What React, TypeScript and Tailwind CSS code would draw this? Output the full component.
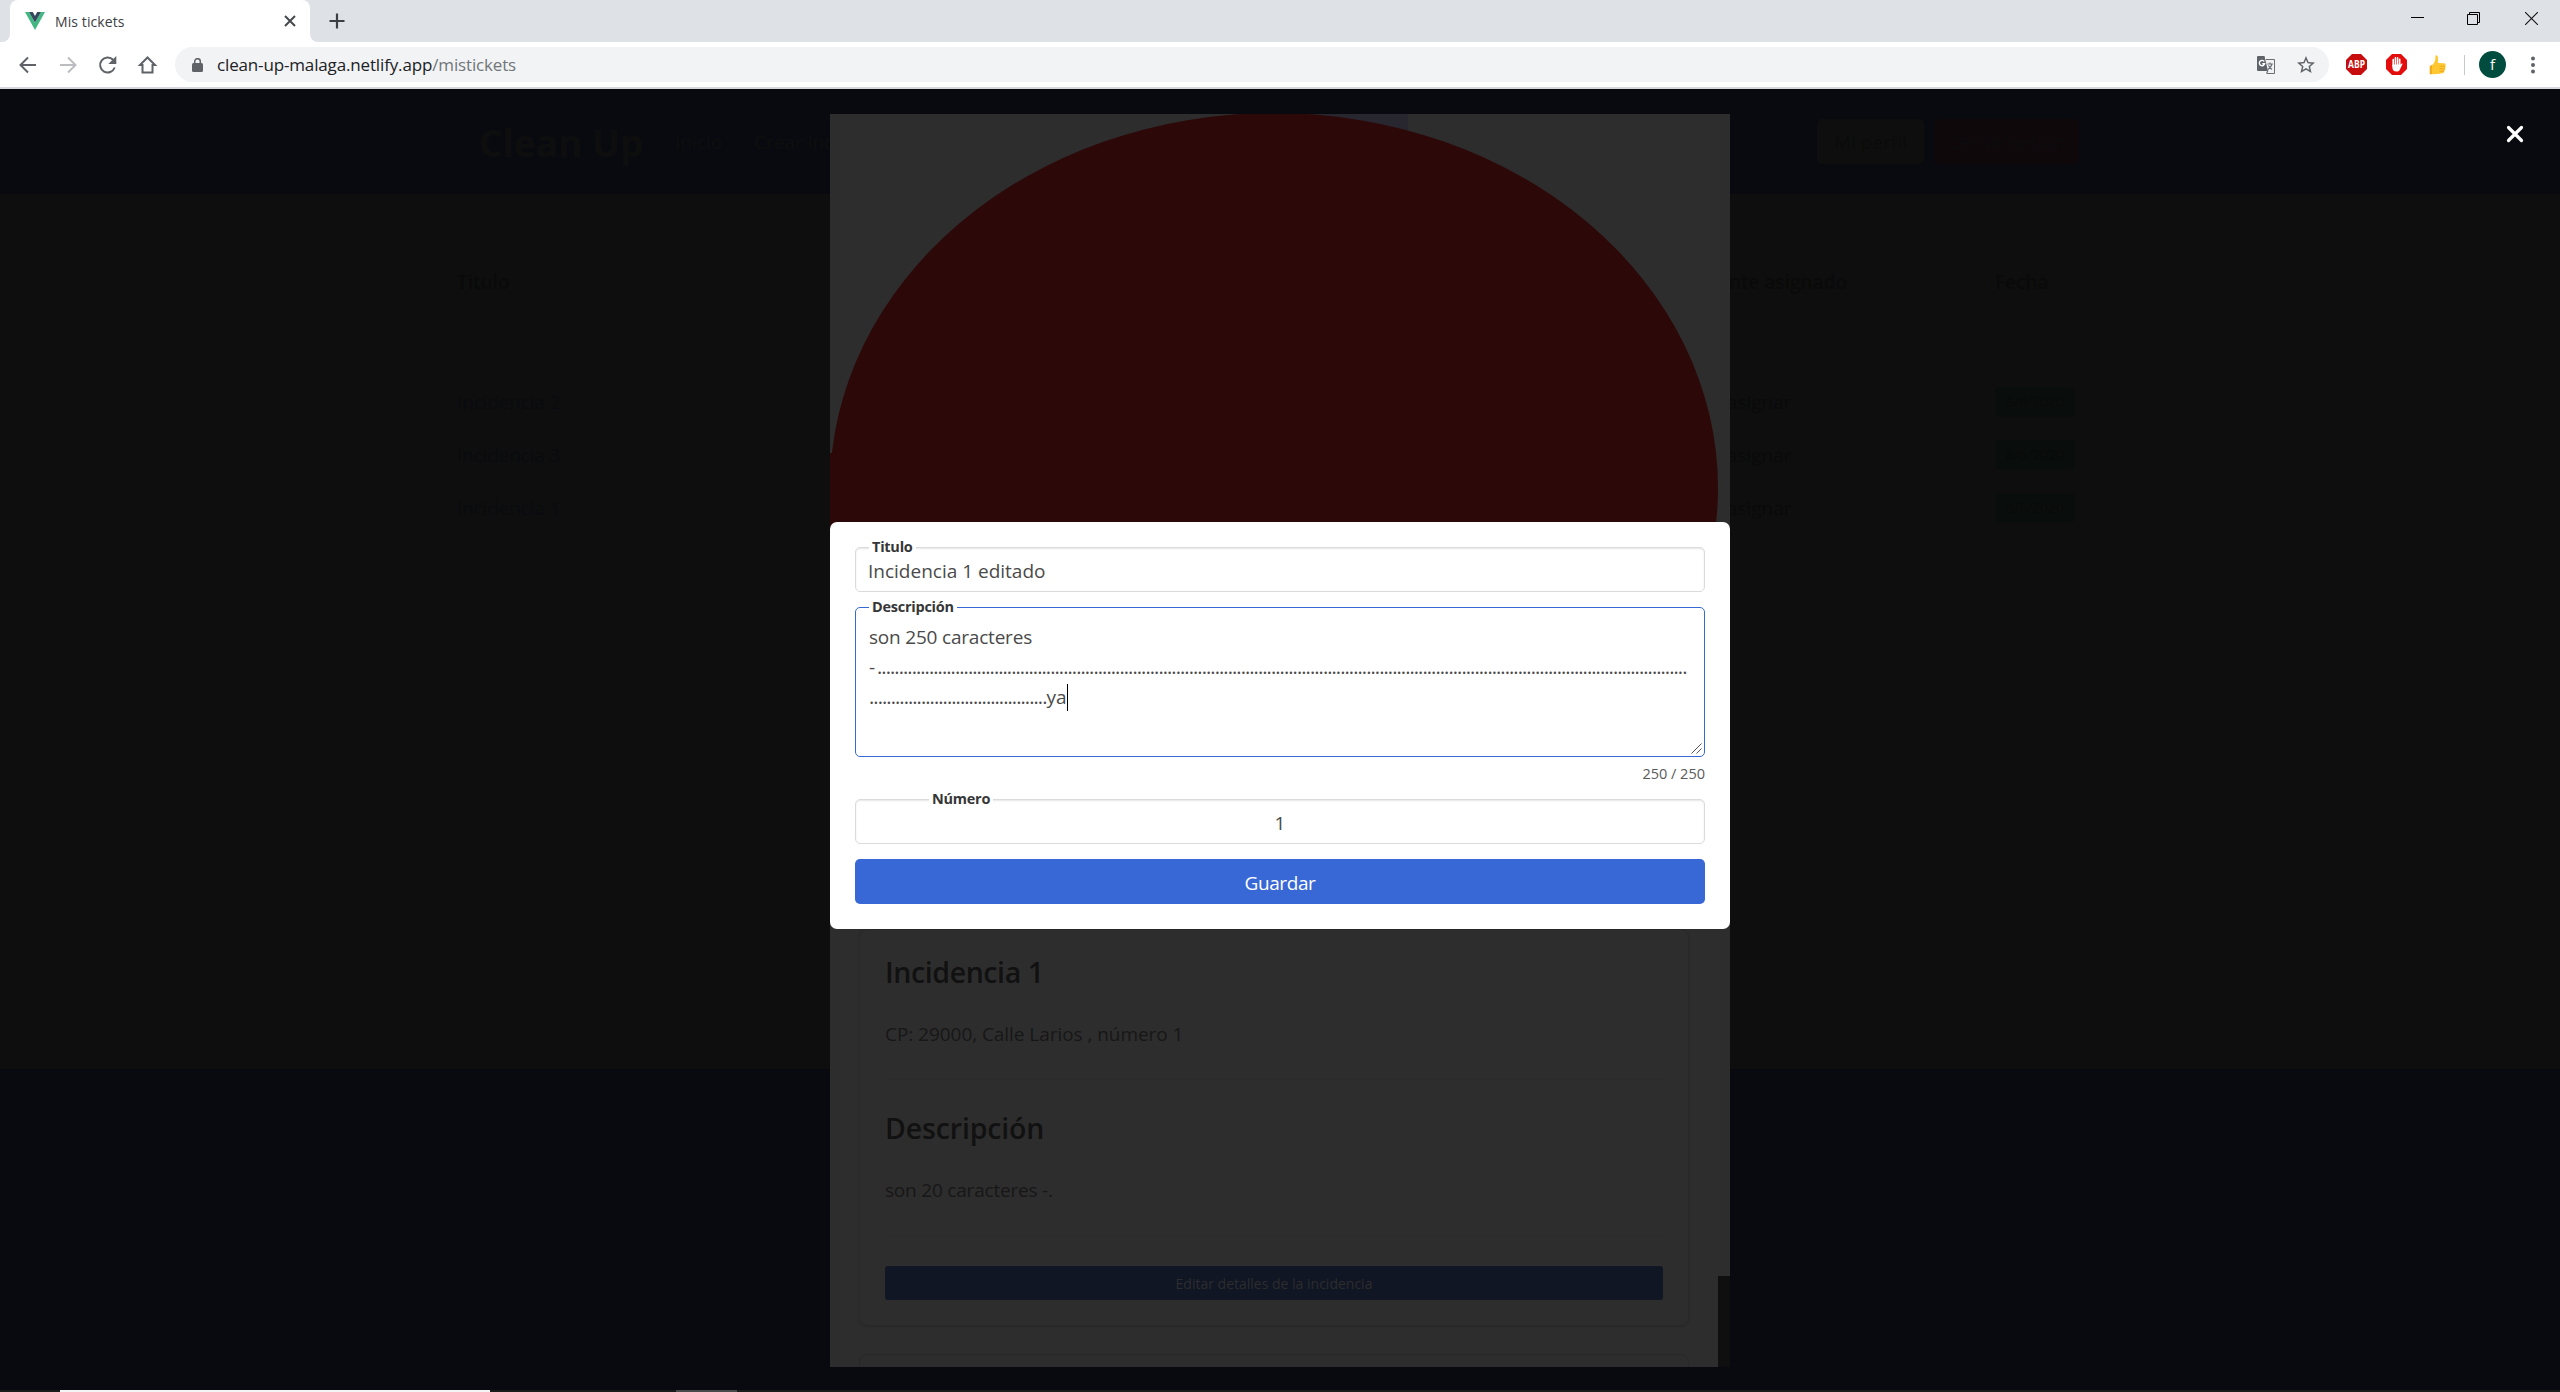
import React from "react";

const DOTS_FULL = ".".repeat(187);
const DOTS_REST = ".".repeat(41);

function TabStrip() {
  return (
    <div className="flex h-[42px] bg-[#dee1e6]">
      <div className="h-full w-[10px] bg-white">
        <div className="h-full w-full rounded-br-[8px] bg-[#dee1e6]" />
      </div>
      <div className="flex h-full w-[300px] items-center rounded-t-[8px] bg-white pl-[15px]">
        <svg width="20" height="18" viewBox="0 0 20 18">
          <path d="M0 0h4l6 10.5L16 0h4L10 18z" fill="#41b883" />
          <path d="M4 0h3.8L10 4l2.200-4H16l-6 10.500z" fill="#34495e" />
        </svg>
        <span className="ml-[10px] w-[219px] text-[14px] tracking-[0.1px] text-[#3c4043]">Mis tickets</span>
        <svg width="12" height="12" viewBox="0 0 12 12" className="ml-[10px]">
          <path d="M1 1l10 10M11 1L1 11" stroke="#45494d" strokeWidth="2" />
        </svg>
      </div>
      <div className="h-full w-[10px] bg-white">
        <div className="h-full w-full rounded-bl-[8px] bg-[#dee1e6]" />
      </div>
      <svg width="16" height="16" viewBox="0 0 16 16" className="mt-[13px] ml-[9px]">
        <path d="M8 0.500v15M0.500 8h15" stroke="#3c4043" strokeWidth="2.200" />
      </svg>
      <div className="flex-1" />
      <svg width="13" height="14" viewBox="0 0 13 14" className="mt-[12px] mr-[43px]">
        <path d="M0 5.500h13" stroke="#000" />
      </svg>
      <svg width="13" height="14" viewBox="0 0 13 14" className="mt-[12px] mr-[45px]">
        <path d="M0.500 2.500h10v10h-10zM2.500 2.500v-2h10v10h-2" stroke="#000" fill="none" />
      </svg>
      <svg width="13" height="13" viewBox="0 0 13 13" className="mt-[12px] mr-[22px]">
        <path d="M0 0l13 13M13 0L0 13" stroke="#111" strokeWidth="1.100" />
      </svg>
    </div>
  );
}

function AddressBar() {
  return (
    <div className="flex h-[47px] items-center border-b-2 border-[#d5d8dc] bg-white">
      <svg width="175" height="26" viewBox="0 0 175 26" fill="none" stroke="#5f6368" strokeWidth="2">
        <path d="M36 13H21M28 5.500L20.500 13l7.500 7.500" />
        <path d="M60 13h15M68 5.500l7.500 7.500-7.500 7.500" stroke="#bbbdc0" />
        <path d="M114.700 15.500a7.500 7.500 0 1 1-1.600-7.700" />
        <path d="M116.300 4v8h-8z" fill="#5f6368" stroke="none" />
        <path d="M142.500 20.500v-7.500h-2.500l7.500-7.500 7.500 7.500h-2.500v7.500z" />
      </svg>
      <div className="flex h-[35px] w-[2154px] items-center rounded-full bg-[#f1f3f4] pl-[17px]">
        <svg width="11" height="15" viewBox="0 0 11 15" className="mt-[2px]">
          <rect y="5" width="11" height="9" rx="1.500" fill="#5f6368" />
          <path d="M2.700 6V3.500a2.800 2.800 0 0 1 5.600 0V6" fill="none" stroke="#5f6368" strokeWidth="1.500" />
        </svg>
        <span className="ml-[14px] text-[17px] tracking-[-0.15px] text-[#202124]">
          clean-up-malaga.netlify.app<span className="text-[#72767a]">/mistickets</span>
        </span>
        <div className="flex-1" />
        <svg width="18" height="18" viewBox="0 0 18 18" className="mr-[22px]">
          <path d="M9 3.500h8.500v14H10" fill="#f1f3f4" stroke="#6a6e72" strokeWidth="1" />
          <path d="M1 0h6.500l3.500 15H1a1 1 0 0 1-1-1V1a1 1 0 0 1 1-1z" fill="#5f6368" />
          <path d="M7.300 5.500A2.700 2.700 0 1 0 7.700 7.700H5.300" fill="none" stroke="#fff" strokeWidth="1.400" />
          <path d="M10.300 8h5.500M13 6.500V8M15 8c-.5 2-2 4-4 5.500M11.500 9.500c1 2 2 3 3.500 4M9.500 17.500l1.500-3" fill="none" stroke="#6a6e72" strokeWidth="1.100" />
        </svg>
        <svg width="18" height="18" viewBox="2 2 20 20" className="mr-[14px]">
          <path d="M22 9.240l-7.190-.62L12 2 9.190 8.630 2 9.240l5.460 4.730L5.820 21 12 17.270 18.180 21l-1.630-7.030L22 9.240zM12 15.400l-3.760 2.270 1-4.280-3.320-2.880 4.380-.38L12 6.100l1.710 4.040 4.380.38-3.320 2.880 1 4.280L12 15.400z" fill="#5f6368" />
        </svg>
      </div>
      <svg width="21" height="21" viewBox="0 0 21 21" className="ml-[17px] overflow-visible">
        <path d="M6 0h9l6 6v9l-6 6H6l-6-6V6z" fill="#c70d0d" />
        <text x="2" y="14.300" fontSize="11" fontWeight="700" fill="#fff" textLength="17" lengthAdjust="spacingAndGlyphs">ABP</text>
      </svg>
      <svg width="21" height="21" viewBox="0 0 21 21" className="ml-[19px]">
        <path d="M6 0h9l6 6v9l-6 6H6l-6-6V6z" fill="#e40d0d" />
        <path d="M7.200 5.500v7M9.400 3.700v8M11.600 3.700v8M13.700 5.200v7" stroke="#fff" strokeWidth="1.600" strokeLinecap="round" />
        <path d="M6.400 10.500h8.100l1.200-1c.8-.3 1 .3.600.9l-2.400 5c-.7 1.400-1.500 2-3.200 2-3 0-4.300-1.400-4.300-4z" fill="#fff" />
      </svg>
      <svg width="17" height="20" viewBox="0 0 17 20" className="ml-[22px]">
        <path d="M6.500 0.500C8 0 9 1 9 3v5l6 .3c2 0 2 2 1.200 2.700.8.8.7 2-.2 2.600.5 1 0 2-.8 2.400.2 1.300-.6 2-1.700 2.200-4 .8-8 1.200-12 1V11C4.500 10 6.500 6 6.300 3z" fill="#ffc832" />
        <path d="M0.700 11L3 10v9l-2.300.3z" fill="#f0ab20" />
        <path d="M10.500 11.200h5.500M10.500 13.800h5.200M10.500 16.300h4.600" stroke="#e8a21c" strokeWidth=".8" />
      </svg>
      <div className="ml-[18px] h-[20px] w-px bg-[#c6c9cc]" />
      <div className="ml-[14px] flex size-[27px] items-center justify-center rounded-full bg-[#004d40] text-[15px] text-white">f</div>
      <svg width="4" height="18" viewBox="0 0 4 18" className="ml-[25px]" fill="#5f6368">
        <circle cx="2" cy="2.500" r="2" />
        <circle cx="2" cy="9" r="2" />
        <circle cx="2" cy="15.500" r="2" />
      </svg>
    </div>
  );
}

function DimmedPage() {
  const rows = [
    ["Incidencia 2", "Sin asignar"],
    ["Incidencia 3", "Sin asignar"],
    ["Incidencia 1", "Sin asignar"],
  ];
  return (
    <div className="flex h-full flex-col bg-[#0e0e0e] text-[19px] text-[#0a0a0a]">
      <div className="flex h-[105px] items-start bg-[#090a0f] pl-[479px] text-[#0e0e0e]">
        <div className="mt-[29px] w-[196px] text-[37px] leading-[50px] font-bold">Clean Up</div>
        <div className="mt-[39px] w-[79px] leading-[28px]">Inicio</div>
        <div className="mt-[39px] w-[1063px] leading-[28px]">Crear incidencia</div>
        <div className="mt-[30px] flex h-[45px] w-[107px] items-center justify-center rounded-[5px] bg-[#0e0e0e] pt-[2px] text-[#0b0b0c]">Mi perfil</div>
        <div className="mt-[30px] ml-[10px] flex h-[45px] w-[145px] items-center justify-center rounded-[5px] bg-[#0e080a] pt-[2px] text-[#0c0b0d]">Cerrar sesión</div>
      </div>
      <div className="mt-[74px] flex h-[28px] items-center pl-[457px] font-semibold">
        <div className="w-[1238px]">Titulo</div>
        <div className="w-[300px]">Agente asignado</div>
        <div>Fecha</div>
      </div>
      <div className="mt-[79px] flex-1">
        {rows.map(([title, agent]) => (
          <div key={title} className="flex h-[53px] items-center pl-[457px]">
            <div className="w-[1238px] pt-[2px] tracking-[-0.150px] text-[#0a0b0e]">{title}</div>
            <div className="w-[300px] pt-[2px]">{agent}</div>
            <div className="flex h-[30px] w-[80px] items-center justify-center rounded-[5px] bg-[#090d0c] text-[14px]">8/6/2020</div>
          </div>
        ))}
      </div>
      <div className="h-[321px] bg-[#090a0f]" />
    </div>
  );
}

function TicketPanel() {
  return (
    <div className="flex h-[1253px] w-[900px] overflow-hidden bg-[#2d2d2d] text-[#171717]">
      <div className="flex w-[888px] flex-col">
        <svg width="888" height="724" viewBox="0 0 888 724" className="shrink-0">
          <path d="M480 0h98v60h-98z" fill="#28272f" />
          <ellipse cx="444" cy="374" rx="444" ry="375" fill="#2d0809" />
          <rect y="339" width="8" height="80" fill="#2d0809" />
        </svg>
        <div className="mx-[29px] mt-[91px] h-[397px] shrink-0 rounded-[8px] border border-[#282828] px-[25px] shadow-[0_1px_2px_#282828]">
          <div className="mt-[22px] text-[28.500px] leading-[40px] font-semibold tracking-[-0.4px] text-[#111]">Incidencia 1</div>
          <div className="mt-[28px] text-[19px] leading-[28px] tracking-[-0.050px]">CP: 29000, Calle Larios , número 1</div>
          <div className="mt-[31px] h-px bg-[#2b2b2b]" />
          <div className="mt-[28px] text-[28.500px] leading-[40px] font-semibold tracking-[-0.150px] text-[#111]">Descripción</div>
          <div className="mt-[28px] text-[19px] leading-[28px] tracking-[-0.200px]">son 20 caracteres -.</div>
          <div className="mt-[31px] h-px bg-[#2b2b2b]" />
          <div className="mt-[30px] flex h-[34px] items-center justify-center rounded-[3px] bg-[#101624] text-[14px] text-[#2d2d2d]">Editar detalles de la incidencia</div>
        </div>
        <div className="mx-[29px] mt-[28px] h-[80px] shrink-0 rounded-[8px] border border-[#282828]" />
      </div>
      <div className="mt-[1162px] h-[92px] w-[12px] bg-[#0f0f10]" />
    </div>
  );
}

function Label({ children, left }: { children: React.ReactNode; left: string }) {
  return <span className={`absolute -top-[12px] bg-white px-[3px] text-[14.500px] leading-[22px] font-bold tracking-[-0.250px] text-[#363636] ${left}`}>{children}</span>;
}

function EditForm() {
  return (
    <div className="flex h-[407px] w-[900px] flex-col rounded-[7px] bg-white px-[25px] pt-[25px] text-[19px] text-[#4a4a4a]">
      <div className="relative flex h-[45px] items-center rounded-[5px] border border-[#dbdbdb] pt-[4px] pl-[12px] shadow-[inset_0_1px_2px_rgba(10,10,10,0.1)]">
        <Label left="left-[13px]">Titulo</Label>
        <span>Incidencia 1 editado</span>
      </div>
      <div className="relative mt-[15px] h-[150px] rounded-[5px] border border-[#3868d6] px-[13px] pt-[14px] leading-[30px]">
        <Label left="left-[13px]">Descripción</Label>
        <div className="tracking-[-0.200px]">son 250 caracteres</div>
        <div className="flex">
          <span className="w-[8px]">-</span>
          <span className="whitespace-nowrap text-[20px] tracking-[-0.925px]">{DOTS_FULL}</span>
        </div>
        <div className="flex items-center">
          <span className="text-[20px] tracking-[-0.925px]">{DOTS_REST}</span>
          <span>ya</span>
          <span className="h-[27px] w-px bg-black" />
        </div>
        <svg width="11" height="11" viewBox="0 0 11 11" className="absolute right-[2px] bottom-[2px]">
          <path d="M0.500 10.500l10-10M5.500 10.500l5-5" stroke="#555" />
        </svg>
      </div>
      <div className="mt-[5px] h-[24px] text-right text-[14.500px] leading-[24px] text-[#5a5a5a]">250 / 250</div>
      <div className="relative mt-[13px] flex h-[45px] items-center justify-center rounded-[5px] border border-[#dbdbdb] pt-[4px] shadow-[inset_0_1px_2px_rgba(10,10,10,0.1)]">
        <Label left="left-[73px]">Número</Label>
        <span>1</span>
      </div>
      <div className="mt-[15px] flex h-[45px] items-center justify-center rounded-[5px] bg-[#3868d6] pt-[3px] tracking-[-0.400px] text-white">Guardar</div>
    </div>
  );
}

export default function App() {
  return (
    <div className="flex h-[1392px] w-[2560px] flex-col overflow-hidden font-['Open_Sans','Noto_Sans',sans-serif]">
      <TabStrip />
      <AddressBar />
      <div className="relative h-[1301px]">
        <DimmedPage />
        <div className="absolute top-[25px] left-[830px]">
          <TicketPanel />
        </div>
        <div className="absolute top-[433px] left-[830px]">
          <EditForm />
        </div>
        <svg width="18" height="18" viewBox="0 0 18 18" className="absolute top-[36px] left-[2506px]">
          <path d="M2.500 2.500l13 13M15.500 2.500l-13 13" stroke="#fff" strokeWidth="3.200" strokeLinecap="round" />
        </svg>
      </div>
      <div className="flex h-[2px] bg-[#1b1b1b]">
        <div className="ml-[60px] h-full w-[430px] bg-[#f4f4f4]" />
        <div className="ml-[186px] h-full w-[61px] bg-[#4a4a4a]" />
      </div>
    </div>
  );
}
